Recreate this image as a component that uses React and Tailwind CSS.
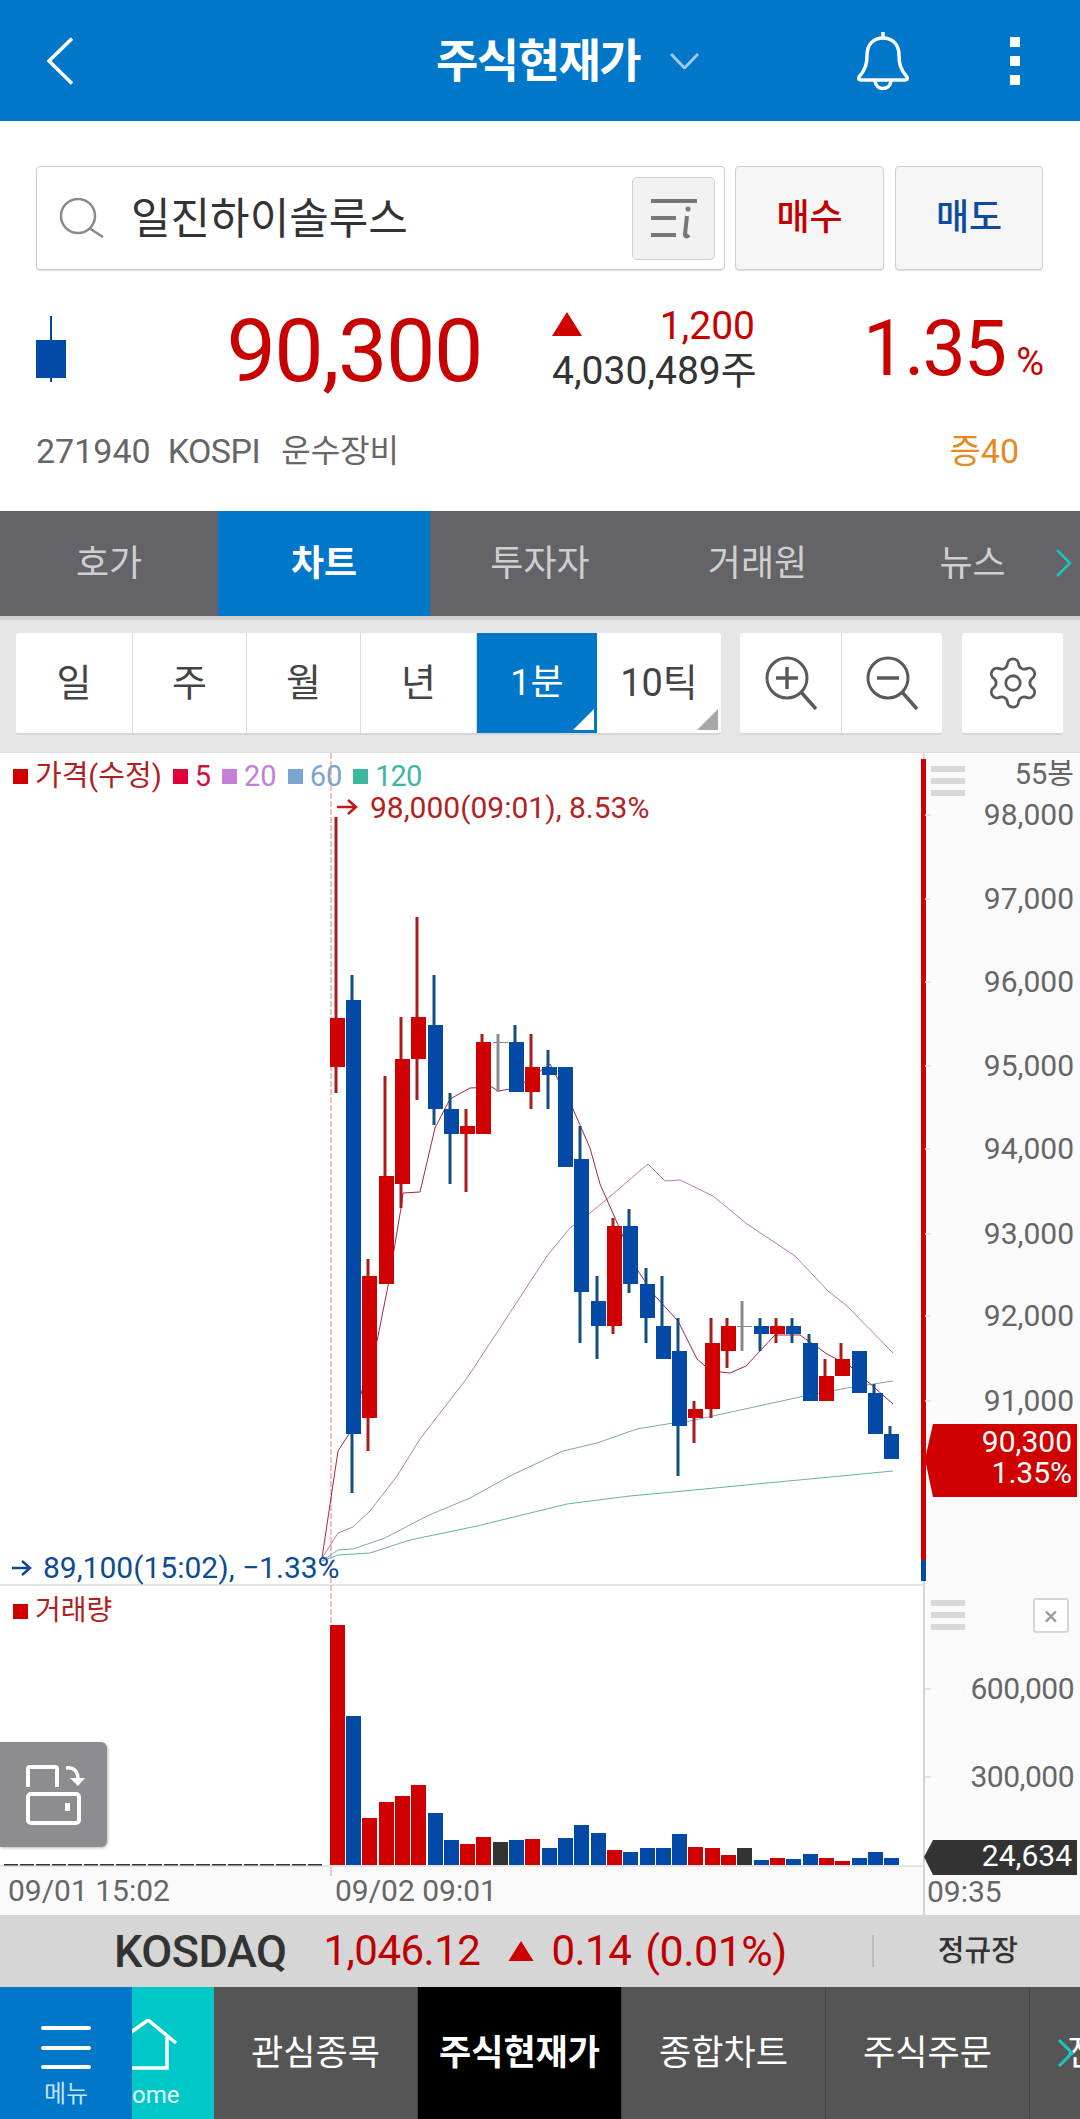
import React from 'react';
import { Settings } from 'lucide-react';

const RED = '#d00000';
const BLUE = '#034aa6';
const GREY = '#8a8a8a';

// [x, top, bottom, wickX, wickTop, wickBottom, color, volumeTop]
const candles = [
  [330, 1017, 1066, 336, 816, 1092, RED, 1624],
  [346, 999, 1433, 352, 974, 1492, BLUE, 1715],
  [362, 1275, 1417, 368, 1258, 1450, RED, 1817],
  [379, 1175, 1283, 385, 1075, 1283, RED, 1801],
  [395, 1058, 1183, 401, 1016, 1207, RED, 1795],
  [411, 1016, 1058, 417, 916, 1099, RED, 1784],
  [428, 1024, 1108, 434, 974, 1124, BLUE, 1812],
  [444, 1108, 1133, 450, 1092, 1183, BLUE, 1839],
  [460, 1125, 1133, 466, 1108, 1191, RED, 1843],
  [476, 1041, 1133, 482, 1033, 1133, RED, 1836],
  [493, 1041, 1042, 498, 1033, 1091, GREY, 1841],
  [509, 1041, 1091, 515, 1024, 1091, BLUE, 1839],
  [525, 1066, 1091, 531, 1033, 1108, RED, 1838],
  [542, 1066, 1074, 548, 1049, 1108, BLUE, 1847],
  [558, 1066, 1166, 564, 1066, 1166, BLUE, 1837],
  [574, 1158, 1291, 580, 1125, 1342, BLUE, 1824],
  [591, 1300, 1325, 597, 1275, 1358, BLUE, 1832],
  [607, 1225, 1325, 613, 1217, 1333, RED, 1849],
  [623, 1225, 1283, 629, 1208, 1292, BLUE, 1851],
  [640, 1283, 1317, 646, 1267, 1342, BLUE, 1847],
  [656, 1325, 1358, 662, 1275, 1358, BLUE, 1847],
  [672, 1350, 1425, 678, 1317, 1475, BLUE, 1833],
  [688, 1408, 1417, 694, 1400, 1442, RED, 1846],
  [705, 1342, 1408, 711, 1317, 1417, RED, 1847],
  [721, 1325, 1350, 727, 1317, 1367, RED, 1854],
  [737, 1325, 1326, 742, 1300, 1350, GREY, 1847],
  [754, 1325, 1333, 760, 1317, 1350, BLUE, 1859],
  [770, 1325, 1333, 776, 1317, 1342, RED, 1857],
  [786, 1325, 1333, 792, 1317, 1342, BLUE, 1858],
  [803, 1342, 1400, 809, 1333, 1400, BLUE, 1853],
  [819, 1375, 1400, 825, 1358, 1400, RED, 1857],
  [835, 1358, 1375, 841, 1342, 1375, RED, 1860],
  [852, 1350, 1392, 858, 1350, 1392, BLUE, 1857],
  [868, 1392, 1433, 874, 1383, 1433, BLUE, 1851],
  [884, 1433, 1458, 890, 1425, 1458, BLUE, 1857],
];

const ma5 = '322,1557 338,1450 349,1433 377,1340 388,1285 401,1207 403,1192 420,1191 435,1127 450,1098 470,1087 492,1086 498,1090 510,1088 527,1080 550,1063 573,1108 590,1147 600,1183 615,1217 638,1270 655,1295 678,1320 697,1358 705,1365 720,1371 730,1372 746,1365 760,1350 775,1334 800,1334 827,1353 850,1365 867,1380 893,1403';
const ma20 = '322,1557 338,1532 353,1526 370,1510 397,1475 420,1438 467,1377 500,1327 547,1255 570,1227 590,1212 607,1198 648,1163 665,1180 680,1179 713,1195 747,1223 795,1255 828,1290 847,1305 893,1352';
const ma60 = '322,1560 338,1549 353,1548 385,1537 427,1515 470,1497 510,1475 563,1450 597,1442 637,1428 673,1422 690,1420 800,1396 847,1387 893,1380';
const ma120 = '322,1560 338,1554 370,1552 410,1539 477,1525 567,1503 630,1495 673,1491 893,1470';

const priceTicks = [
  ['98,000', 814], ['97,000', 898], ['96,000', 981], ['95,000', 1065],
  ['94,000', 1148], ['93,000', 1233], ['92,000', 1315], ['91,000', 1400],
];
const volumeTicks = [['600,000', 1688], ['300,000', 1776]];

const dashes = Array.from({ length: 20 }, (_, i) => 4 + i * 16);

const periods = [
  ['일', 'w-[117px]'], ['주', 'w-[114px]'], ['월', 'w-[114px]'], ['년', 'w-[116px]'],
];

const tabs = [
  ['호가', 'w-[218px]', false], ['차트', 'w-[212px]', true], ['투자자', 'w-[220px]', false],
  ['거래원', 'w-[215px]', false], ['뉴스', 'w-[215px]', false],
];

const navItems = [['관심종목', false], ['주식현재가', true], ['종합차트', false], ['주식주문', false]];

const Triangle = ({ className }) => (
  <svg viewBox="0 0 30 24" className={className}>
    <path d="M15 0 L30 24 L0 24 Z" fill="#d00000" />
  </svg>
);

const Burger = ({ className }) => (
  <div className={`flex flex-col gap-[6px] w-[34px] ${className}`}>
    <div className="h-[6px] bg-[#d8d8d8]" />
    <div className="h-[6px] bg-[#d8d8d8]" />
    <div className="h-[6px] bg-[#d8d8d8]" />
  </div>
);

const ChartDrawing = () => (
  <svg viewBox="0 752 1080 1163" className="absolute inset-0 w-[1080px] h-[1163px] pointer-events-none" fill="none">
    <line x1="331" y1="752" x2="331" y2="1875" stroke="#f5a8a8" strokeWidth="1.5" strokeDasharray="6 2" />
    <line x1="331" y1="1864" x2="331" y2="1875" stroke="#d5d5d5" strokeWidth="2" />
    <polyline points={ma120} stroke="#62b3a8" strokeWidth="1" />
    <polyline points={ma60} stroke="#7fa3b5" strokeWidth="1" />
    <polyline points={ma20} stroke="#b77db8" strokeWidth="1" />
    <polyline points={ma5} stroke="#a8244f" strokeWidth="1" />
    {candles.map(([x, top, bottom, wx, wt, wb, color], i) => (
      <g key={i}>
        <rect x={wx - 1.5} y={wt} width="3" height={wb - wt} fill={color === RED ? '#a81c1c' : color === BLUE ? '#14507e' : GREY} />
        <rect x={x} y={top} width="15" height={bottom - top} fill={color} />
      </g>
    ))}
    {dashes.map((x) => (
      <rect key={x} x={x} y="1863" width="14" height="1.5" fill="#333" />
    ))}
    {candles.map(([x, , , , , , color, vol], i) => (
      <rect key={i} x={x} y={vol} width="15" height={1864 - vol} fill={color === GREY ? '#333333' : color} />
    ))}
    <rect x="921" y="758" width="5" height="801" fill="#d00000" />
    <rect x="921" y="1559" width="5" height="21" fill="#034aa6" />
    {[...priceTicks, ...volumeTicks].map(([label, y]) => (
      <line key={label} x1="925" y1={y} x2="931" y2={y} stroke="#dddddd" strokeWidth="1.5" />
    ))}
    <path d="M337 806 H355 M348 799 L356 806 L348 813" stroke="#c01818" strokeWidth="2.5" />
    <path d="M12 1567 H29 M22 1560 L30 1567 L22 1574" stroke="#0d4c92" strokeWidth="2.5" />
    <path d="M933 1423 H1077 V1496 H933 L925 1458 Z" fill="#d00000" />
    <path d="M933 1839 H1077 V1874 H933 L924 1856 Z" fill="#333333" />
  </svg>
);

const Legend = ({ color, textColor, label }) => (
  <div className="flex items-center">
    <div className={`w-[15px] h-[15px] ${color}`} />
    <span className={`ml-[7px] ${textColor}`}>{label}</span>
  </div>
);

const App = () => {
  return (
    <div className="w-[1080px] h-[2119px] flex flex-col overflow-hidden bg-white text-[#333] [font-family:Roboto,'Noto_Sans_CJK_KR',sans-serif]">
      {/* Header */}
      <div className="h-[121px] shrink-0 bg-[#0077c8] flex items-center text-white">
        <svg viewBox="0 0 26 48" className="w-[26px] h-[48px] ml-[47px]" fill="none">
          <path d="M25 1.5 L2 24 L25 46.5" stroke="#fff" strokeWidth="3.5" />
        </svg>
        <div className="ml-[363px] w-[209px] text-[46px] font-bold leading-none tracking-[-1.5px] whitespace-nowrap">주식현재가</div>
        <svg viewBox="0 0 29 16" className="w-[29px] h-[16px] ml-[25px]" fill="none">
          <path d="M1 1 L14.5 15 L28 1" stroke="#9ccbee" strokeWidth="3" />
        </svg>
        <svg viewBox="0 0 54 60" className="w-[54px] h-[60px] ml-[157px]" fill="none">
          <path d="M27 1 V7 M3 46 C10 38 11 32 11 24 C11 13 18 7 27 7 C36 7 43 13 43 24 C43 32 44 38 51 46 C52 48 51 49 49 49 H5 C3 49 2 48 3 46 Z" stroke="#fff" strokeWidth="3.5" />
          <path d="M19 50 C20 60 34 60 35 50" stroke="#fff" strokeWidth="3.5" />
        </svg>
        <div className="ml-[100px] flex flex-col gap-[9px]">
          <div className="w-[10px] h-[10px] bg-white" />
          <div className="w-[10px] h-[10px] bg-white" />
          <div className="w-[10px] h-[10px] bg-white" />
        </div>
      </div>

      {/* Search and quote */}
      <div className="h-[390px] shrink-0 px-[36px] pt-[45px]">
        <div className="flex h-[104px]">
          <div className="w-[689px] border border-[#cccccc] rounded-[4px] flex items-center pl-[21px] pr-[9px] shadow-[0_1px_1px_#ddd]">
            <svg viewBox="0 0 48 40" className="w-[48px] h-[40px]" fill="none">
              <circle cx="20" cy="18" r="17" stroke="#8a8a8a" strokeWidth="2.5" />
              <path d="M31 30 L45 39" stroke="#8a8a8a" strokeWidth="2.5" />
            </svg>
            <div className="ml-[25px] mt-[3px] text-[43px] leading-none text-[#333]">일진하이솔루스</div>
            <div className="ml-auto w-[83px] h-[83px] rounded-[5px] bg-[#f2f2f2] border border-[#d0d0d0] flex items-center justify-center">
              <svg viewBox="0 0 48 44" className="w-[48px] h-[44px]" fill="none">
                <path d="M1 5 H47 M1 22 H26 M1 39 H26" stroke="#777" strokeWidth="4" />
                <path d="M37 20 L35 38 C35 41 37 41 39 39" stroke="#777" strokeWidth="4" />
                <circle cx="38" cy="13" r="2.5" fill="#777" />
              </svg>
            </div>
          </div>
          <div className="ml-[10px] w-[149px] rounded-[4px] bg-[#f5f5f5] border border-[#d0d0d0] flex items-center justify-center text-[36px] font-medium text-[#c00000] shadow-[0_1px_1px_#ddd]">매수</div>
          <div className="ml-[11px] w-[148px] rounded-[4px] bg-[#f5f5f5] border border-[#d0d0d0] flex items-center justify-center text-[36px] font-medium text-[#0d4ba0] shadow-[0_1px_1px_#ddd]">매도</div>
        </div>

        <div className="flex h-[87px] mt-[35px]">
          <svg viewBox="0 0 30 66" className="w-[30px] h-[66px] mt-[11px]">
            <rect x="14" y="0" width="2" height="66" fill="#034aa6" />
            <rect x="0" y="24" width="30" height="38" fill="#034aa6" />
          </svg>
          <div className="w-[416px] text-right text-[88px] leading-[87px] tracking-[-1.5px] text-[#c80000] mt-[2px]">90,300</div>
          <div className="ml-[70px] w-[206px] flex flex-col">
            <div className="flex items-center justify-between h-[42px] text-[39px] text-[#c80000] leading-none">
              <Triangle className="w-[30px] h-[24px] -mt-[4px]" />
              <span className="mr-[3px]">1,200</span>
            </div>
            <div className="text-[39px] leading-[42px] text-[#333] whitespace-nowrap mt-[3px]">4,030,489주</div>
          </div>
          <div className="flex-1 flex justify-end items-baseline text-[#c80000] mt-[4px]">
            <span className="text-[77px] leading-[80px] tracking-[-2px]">1.35</span>
            <span className="ml-[11px] text-[38px] leading-none">%</span>
          </div>
        </div>

        <div className="flex items-center h-[40px] mt-[39px] text-[#666] text-[34px] leading-none">
          <span>271940</span>
          <span className="ml-[17px] tracking-[-0.5px]">KOSPI</span>
          <span className="ml-[21px] text-[32px]">운수장비</span>
          <span className="ml-auto mr-[25px] text-[#e58a1f]">증40</span>
        </div>
      </div>

      {/* Tabs */}
      <div className="relative h-[109px] shrink-0 flex bg-[#636368] border-b-[4px] border-[#d0d0d0] text-[36px]">
        {tabs.map(([label, width, active]) => (
          <div key={label} className={`${width} flex items-center justify-center ${active ? 'bg-[#0077c8] text-white font-bold' : 'text-[#cfcfcf]'}`}>
            {label}
          </div>
        ))}
        <svg viewBox="0 0 16 28" className="absolute left-[1056px] top-[38px] w-[16px] h-[28px]" fill="none">
          <path d="M1 1 L14 14 L1 27" stroke="#1cc4c4" strokeWidth="2.5" />
        </svg>
      </div>

      {/* Period */}
      <div className="h-[132px] shrink-0 bg-[#e6e6e6] flex pt-[13px] text-[#444] text-[38px] leading-none">
        <div className="ml-[16px] w-[705px] h-[102px] flex bg-white border-b-2 border-[#d5d5d5] rounded-[3px] overflow-hidden">
          {periods.map(([label, width]) => (
            <div key={label} className={`${width} flex items-center justify-center border-r border-[#dddddd]`}>{label}</div>
          ))}
          <div className="relative w-[120px] bg-[#0077c8] text-white flex items-center justify-center text-[36px]">
            1분
            <svg viewBox="0 0 21 21" className="absolute right-[3px] bottom-[3px] w-[21px] h-[21px]">
              <path d="M21 0 V21 H0 Z" fill="#fff" />
            </svg>
          </div>
          <div className="relative flex-1 flex items-center justify-center">
            10틱
            <svg viewBox="0 0 21 21" className="absolute right-[3px] bottom-[3px] w-[21px] h-[21px]">
              <path d="M21 0 V21 H0 Z" fill="#a8a8a8" />
            </svg>
          </div>
        </div>
        <div className="ml-[19px] w-[202px] h-[102px] flex bg-white border-b-2 border-[#d5d5d5] rounded-[3px]">
          <div className="w-[102px] flex items-center justify-center border-r border-[#dddddd]">
            <svg viewBox="0 0 54 54" className="w-[54px] h-[54px]" fill="none">
              <circle cx="23" cy="22" r="20" stroke="#5a5a5a" strokeWidth="3" />
              <path d="M37 36 L52 53" stroke="#5a5a5a" strokeWidth="3.5" />
              <path d="M12 22 H34 M23 11 V33" stroke="#5a5a5a" strokeWidth="3.5" />
            </svg>
          </div>
          <div className="flex-1 flex items-center justify-center">
            <svg viewBox="0 0 54 54" className="w-[54px] h-[54px]" fill="none">
              <circle cx="23" cy="22" r="20" stroke="#5a5a5a" strokeWidth="3" />
              <path d="M37 36 L52 53" stroke="#5a5a5a" strokeWidth="3.5" />
              <path d="M12 22 H34" stroke="#5a5a5a" strokeWidth="3.5" />
            </svg>
          </div>
        </div>
        <div className="ml-[20px] w-[101px] h-[102px] flex items-center justify-center bg-white border-b-2 border-[#d5d5d5] rounded-[3px]">
          <Settings size={58} strokeWidth={1.15} color="#5a5a5a" />
        </div>
      </div>

      {/* Chart */}
      <div className="relative h-[1163px] shrink-0 flex border-t border-[#dddddd] text-[30px] leading-none">
        <div className="w-[923px] flex flex-col">
          <div className="relative h-[833px] bg-white border-b-2 border-[#e5e5e5]">
            <div className="absolute left-[13px] top-[8px] flex items-center gap-[11px] text-[29px] leading-[30px] z-10">
              <Legend color="bg-[#d00000]" textColor="text-[#b02020]" label="가격(수정)" />
              <Legend color="bg-[#e0003c]" textColor="text-[#d01040]" label="5" />
              <Legend color="bg-[#c47fd6]" textColor="text-[#c47fd6]" label="20" />
              <Legend color="bg-[#7aa5d2]" textColor="text-[#7aa5d2]" label="60" />
              <Legend color="bg-[#3db8a0]" textColor="text-[#3db8a0] tracking-[-1px]" label="120" />
            </div>
            <div className="absolute left-[370px] top-[40px] text-[#b22222] z-10">98,000(09:01), 8.53%</div>
            <div className="absolute left-[43px] top-[800px] text-[#0d4c92] z-10">89,100(15:02), −1.33%</div>
          </div>
          <div className="relative h-[279px] bg-white">
            <div className="absolute left-[13px] top-[11px] z-10">
              <Legend color="bg-[#d00000]" textColor="text-[#b02020] text-[28px]" label="거래량" />
            </div>
            <div className="absolute left-0 top-[156px] w-[107px] h-[105px] bg-[#8c8c91] rounded-r-[6px] shadow-[1px_1px_3px_#bbb] z-10">
              <svg viewBox="0 0 107 105" className="w-[107px] h-[105px]" fill="none">
                <path d="M28 45 V27 Q28 25 30 25 H55 Q57 25 57 27 V45" stroke="#fff" strokeWidth="4" />
                <path d="M66 26 C74 25 78 29 78 38" stroke="#fff" strokeWidth="3.5" />
                <path d="M70 36 H85 L78 44 Z" fill="#fff" />
                <rect x="28" y="52" width="51" height="29" rx="3" stroke="#fff" strokeWidth="4" />
                <rect x="65" y="61" width="5" height="8" fill="#fff" />
              </svg>
            </div>
          </div>
          <div className="relative flex-1 bg-[#fafafa] border-t-2 border-[#e5e5e5] text-[#666]">
            <span className="absolute left-[8px] top-[9px]">09/01 15:02</span>
            <span className="absolute left-[335px] top-[9px]">09/02 09:01</span>
          </div>
        </div>
        <div className="relative flex-1 bg-[#fafafa] border-l-2 border-[#d5d5d5] text-[#666]">
          <Burger className="absolute left-[6px] top-[13px]" />
          <span className="absolute right-[6px] top-[7px] text-[29px]">55봉</span>
          {priceTicks.map(([label, y]) => (
            <span key={label} className="absolute right-[6px] -translate-y-1/2" style={{ top: y - 752 }}>{label}</span>
          ))}
          <Burger className="absolute left-[6px] top-[847px]" />
          <div className="absolute left-[108px] top-[845px] w-[36px] h-[35px] border-2 border-[#d5d5d5] rounded-[3px] flex items-center justify-center text-[#999] text-[26px] bg-white">×</div>
          {volumeTicks.map(([label, y]) => (
            <span key={label} className="absolute right-[6px] -translate-y-1/2 tracking-[-0.5px]" style={{ top: y - 752 }}>{label}</span>
          ))}
          <span className="absolute left-[2px] top-[1124px]">09:35</span>
        </div>
        <ChartDrawing />
        <div className="absolute right-[8px] top-[673px] text-right text-white leading-[31px] z-10">
          90,300<br />1.35%
        </div>
        <div className="absolute right-[8px] top-[1088px] text-white z-10">24,634</div>
      </div>

      {/* Market index */}
      <div className="h-[72px] shrink-0 bg-[#d6d6d6] flex items-center leading-none">
        <span className="ml-[114px] text-[45px] font-medium text-[#333] tracking-[-0.5px]">KOSDAQ</span>
        <span className="ml-[37px] text-[42px] text-[#c00000] tracking-[-0.5px]">1,046.12</span>
        <Triangle className="ml-[28px] w-[26px] h-[20px]" />
        <span className="ml-[17px] text-[42px] text-[#c00000] tracking-[-0.5px]">0.14</span>
        <span className="ml-[14px] text-[43px] text-[#c00000] tracking-[-0.5px]">(0.01%)</span>
        <div className="ml-[85px] w-[2px] h-[32px] bg-[#bdbdbd]" />
        <span className="ml-[64px] text-[29px] font-medium text-[#333]">정규장</span>
      </div>

      {/* Bottom nav */}
      <div className="flex-1 flex bg-[#555555] text-white text-[35px] leading-none">
        <div className="w-[132px] bg-[#0077c8] flex flex-col items-center pt-[39px] z-10">
          <div className="w-[50px] h-[4px] bg-white rounded-full" />
          <div className="w-[50px] h-[4px] bg-white rounded-full mt-[16px]" />
          <div className="w-[50px] h-[4px] bg-white rounded-full mt-[15px]" />
          <span className="mt-[13px] text-[24px] text-[#c4e2f6]">메뉴</span>
        </div>
        <div className="w-[82px] bg-[#00c8c8] flex flex-col overflow-hidden">
          <svg viewBox="0 0 82 52" className="w-[82px] h-[52px] mt-[32px]" fill="none">
            <path d="M-16 24 L16 1 L44 24 M35 18 V49 H-8" stroke="#fff" strokeWidth="3.5" />
          </svg>
          <span className="mt-[12px] text-[24px] text-[#e4fbfb]">ome</span>
        </div>
        {navItems.map(([label, active]) => (
          <div key={label} className={`w-[204px] flex items-center justify-center border-r border-[#444] ${active ? 'bg-black font-bold' : ''}`}>
            {label}
          </div>
        ))}
        <div className="relative flex-1 overflow-hidden flex items-center">
          <span className="ml-[37px]">잔</span>
          <svg viewBox="0 0 18 28" className="absolute left-[27px] top-[52px] w-[18px] h-[28px]" fill="none">
            <path d="M2 1 L15 14 L2 27" stroke="#1cc4c4" strokeWidth="3" />
          </svg>
        </div>
      </div>
    </div>
  );
};

export default App;
